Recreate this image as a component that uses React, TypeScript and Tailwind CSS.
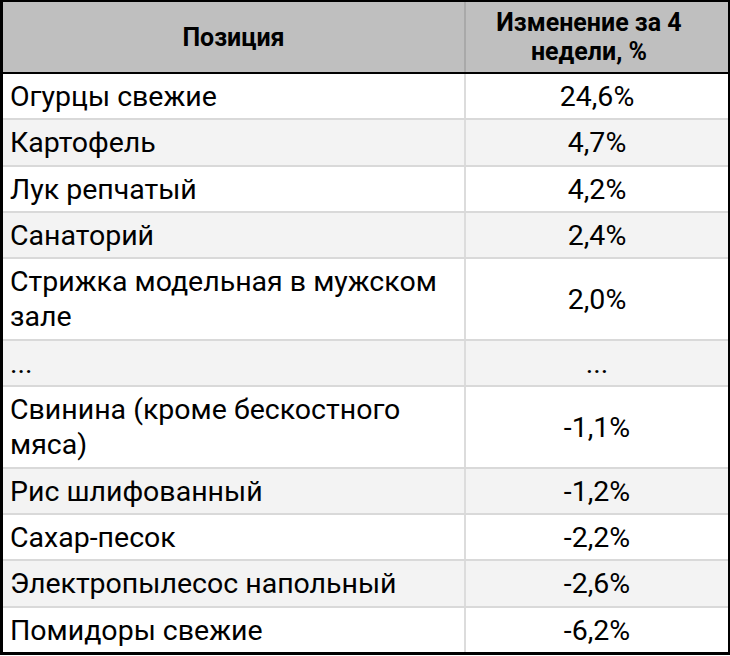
import React from 'react';

// Rows of the price-change table
const ROWS: { name: string; value: string }[] = [
  { name: 'Огурцы свежие', value: '24,6%' },
  { name: 'Картофель', value: '4,7%' },
  { name: 'Лук репчатый', value: '4,2%' },
  { name: 'Санаторий', value: '2,4%' },
  { name: 'Стрижка модельная в мужском зале', value: '2,0%' },
  { name: '...', value: '...' },
  { name: 'Свинина (кроме бескостного мяса)', value: '-1,1%' },
  { name: 'Рис шлифованный', value: '-1,2%' },
  { name: 'Сахар-песок', value: '-2,2%' },
  { name: 'Электропылесос напольный', value: '-2,6%' },
  { name: 'Помидоры свежие', value: '-6,2%' },
];

export default function App() {
  return (
    <div className="w-[730px] h-[656px] bg-white text-black font-['Roboto',sans-serif]">
      <div className="flex flex-col border-t-2 border-r-2 border-b-[3px] border-l-[3px] border-black">
        {/* ── Header ── */}
        <div className="flex h-[72px] bg-[#bfbfbf] border-b-2 border-black font-bold text-[25px] leading-[29px]">
          <div className="w-[463px] flex items-center justify-center border-r-2 border-[#a9a9a9]">
            Позиция
          </div>
          <div className="flex-1 flex items-center justify-center text-center pr-4">
            Изменение за 4<br />недели, %
          </div>
        </div>

        {/* ── Body ── */}
        {ROWS.map((r, i) => (
          <div
            key={i}
            className={
              'flex text-[28.5px] leading-[35.3px] ' +
              (i % 2 === 0 ? 'bg-white' : 'bg-[#f3f3f3]') +
              (i < ROWS.length - 1 ? ' border-b-2 border-[#d9d9d9]' : '')
            }
          >
            <div className="w-[463px] pl-[7px] pr-4 pt-[5px] pb-1 border-r-2 border-[#dcdcdc]">
              {r.name}
            </div>
            <div className="flex-1 flex items-center justify-center pt-[5px] pb-1">
              {r.value}
            </div>
          </div>
        ))}
      </div>
    </div>
  );
}
